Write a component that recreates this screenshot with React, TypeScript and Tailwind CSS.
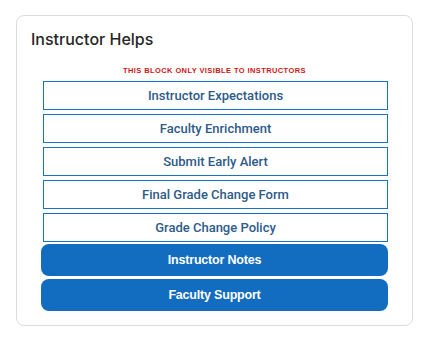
import React from 'react';

const outlineLinks = [
  'Instructor Expectations',
  'Faculty Enrichment',
  'Submit Early Alert',
  'Final Grade Change Form',
  'Grade Change Policy',
];

const solidLinks = ['Instructor Notes', 'Faculty Support'];

export default function App() {
  return (
    <div className="min-h-[349px] w-[426px] bg-white pl-4 pt-[15px]">
      <div className="w-[397px] h-[311px] rounded-lg border border-[#dcdcdc] bg-white px-[15px] pt-[11px]">
        <h2 className="-ml-px text-[16px] font-medium leading-[24px] text-[#262626] [font-family:Inter,'Open_Sans',sans-serif]">
          Instructor Helps
        </h2>

        <div className="mt-[15px] px-[9px]">
          <p className="text-center text-[7.5px] font-bold leading-[10px] tracking-[0.4px] text-[#cc1818] [font-family:'Liberation_Sans',Arial,sans-serif]">
            THIS BLOCK ONLY VISIBLE TO INSTRUCTORS
          </p>

          {/* Outlined links */}
          <div className="mt-[5px] flex flex-col gap-[4px] pl-[2px]">
            {outlineLinks.map((label) => (
              <a
                key={label}
                href="#"
                className="flex h-[29px] items-center justify-center border border-[#1772cc] bg-white text-[13px] font-medium text-[#2d5b8a] [font-family:Roboto,'Liberation_Sans',Arial,sans-serif]"
              >
                {label}
              </a>
            ))}
          </div>

          {/* Solid links */}
          <div className="mt-[2px] flex flex-col gap-[3px]">
            {solidLinks.map((label) => (
              <a
                key={label}
                href="#"
                className="flex h-[32px] items-center justify-center rounded-lg bg-[#126cbf] text-[12.5px] font-bold tracking-[-0.2px] text-white [font-family:'Liberation_Sans',Arial,sans-serif]"
              >
                {label}
              </a>
            ))}
          </div>
        </div>
      </div>
    </div>
  );
}
